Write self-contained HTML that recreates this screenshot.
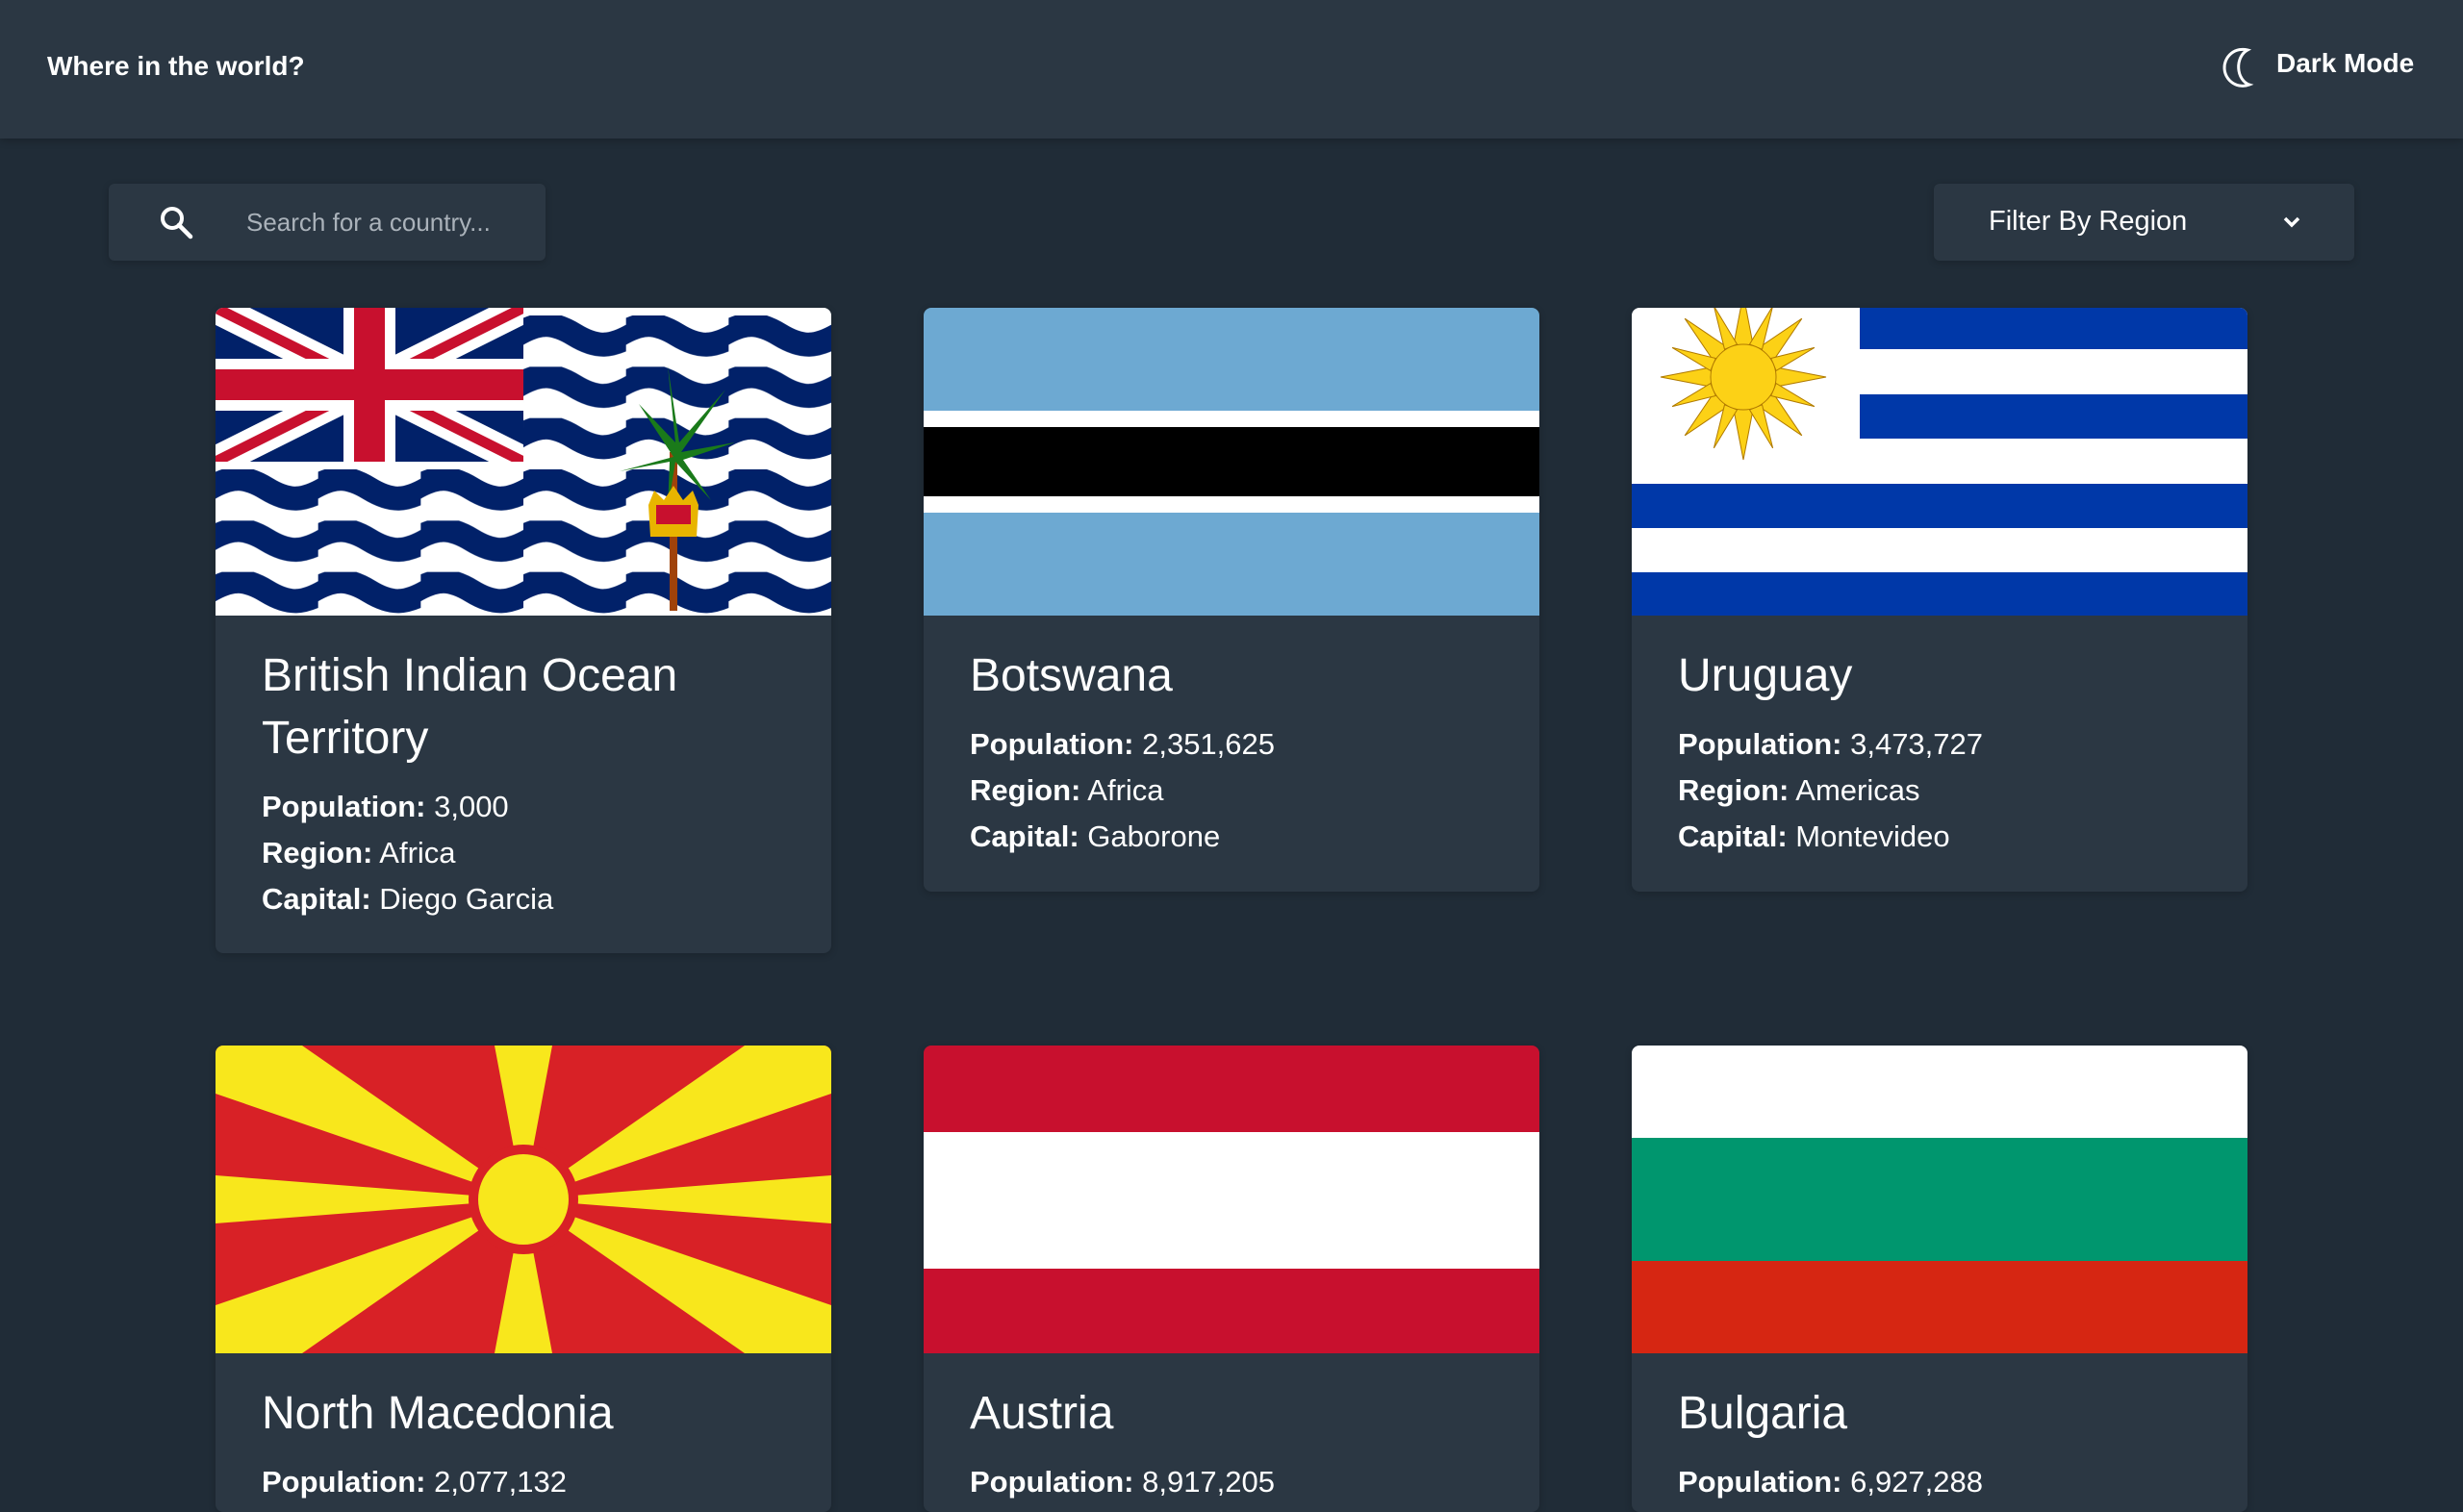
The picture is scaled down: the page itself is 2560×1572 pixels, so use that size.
<!DOCTYPE html>
<html><head><meta charset="utf-8"><style>
*{margin:0;padding:0;box-sizing:border-box}
html{width:2560px;height:1572px;overflow:hidden}
body{width:2560px;height:1572px;overflow:hidden;background:#202c37;font-family:"Liberation Sans",sans-serif;color:#fff;position:relative}
.hdr{position:absolute;left:0;top:0;width:2560px;height:144px;background:#2b3743;box-shadow:0 2px 8px rgba(0,0,0,.25)}
.t{position:absolute;left:49px;top:53px;font-weight:bold;font-size:28px}
.dm{position:absolute;left:2366px;top:50px;font-weight:bold;font-size:28px}
.box{position:absolute;top:191px;height:80px;background:#2b3743;border-radius:6px;box-shadow:0 2px 8px rgba(0,0,0,.2)}
.card{position:absolute;width:640px;background:#2b3743;border-radius:8px;overflow:hidden;box-shadow:0 2px 8px rgba(0,0,0,.2)}
.card svg{display:block}
.body{padding:30px 48px 0}
h2{font-weight:normal;font-size:48px;line-height:65px}
.d{margin-top:15px;font-size:31px;line-height:48px}
.d b{font-weight:bold}
</style></head><body>
<div class="hdr">
<div class="t">Where in the world?</div>
<svg style="position:absolute;left:2306px;top:48px" width="40" height="44" viewBox="0 0 40 44"><path d="M30 4 A19 19 0 1 0 32 40 A15 19 0 0 1 30 4 Z" fill="none" stroke="#fff" stroke-width="3"/></svg>
<div class="dm">Dark Mode</div>
</div>
<div class="box" style="left:113px;width:454px">
<svg style="position:absolute;left:52px;top:22px" width="38" height="38" viewBox="0 0 38 38"><circle cx="14" cy="14" r="10" fill="none" stroke="#fff" stroke-width="4"/><path d="M21 21 L33 33" stroke="#fff" stroke-width="4.5" stroke-linecap="round"/></svg>
<div style="position:absolute;left:143px;top:25px;font-size:26px;color:#aab2ba">Search for a country...</div>
</div>
<div class="box" style="left:2010px;width:437px">
<div style="position:absolute;left:57px;top:23px;font-size:29px">Filter By Region</div>
<svg style="position:absolute;left:362px;top:32px" width="20" height="16" viewBox="0 0 20 16"><path d="M3 4 L10 11 L17 4" fill="none" stroke="#fff" stroke-width="3.5"/></svg>
</div>

<div class="card" style="left:224px;top:320px;height:671px">
<svg width="640" height="320" viewBox="0 0 640 320">
<defs><pattern id="w" width="106.67" height="53.33" patternUnits="userSpaceOnUse" y="8"><rect width="107" height="54" fill="#fff"/><path d="M-10,22 C15,6 30,6 53,20 C76,34 91,34 117,18" fill="none" stroke="#012169" stroke-width="25"/></pattern>
<clipPath id="uj"><rect width="320" height="160"/></clipPath></defs>
<rect width="640" height="320" fill="url(#w)"/>
<g clip-path="url(#uj)"><rect width="320" height="160" fill="#012169"/>
<path d="M0 0 L320 160 M320 0 L0 160" stroke="#fff" stroke-width="32"/>
<path d="M0 0 L320 160 M320 0 L0 160" stroke="#c8102e" stroke-width="11"/>
<path d="M160 0 V160 M0 80 H320" stroke="#fff" stroke-width="54"/>
<path d="M160 0 V160 M0 80 H320" stroke="#c8102e" stroke-width="32"/></g>
<rect x="472" y="150" width="8" height="165" fill="#a0420a"/>
<g fill="#1a7a1a"><path d="M476 155 L440 100 L478 140 L470 60 L482 140 L530 85 L484 150 L540 140 L486 158 L515 200 L478 160 L470 210 L472 160 L420 170 Z"/></g>
<path d="M450 205 L456 190 L466 200 L476 185 L486 200 L496 190 L502 205 L500 238 L452 238 Z" fill="#e8b400"/>
<rect x="458" y="205" width="36" height="20" fill="#c8102e"/>
</svg>
<div class="body"><h2>British Indian Ocean Territory</h2>
<div class="d"><b>Population:</b> 3,000<br><b>Region:</b> Africa<br><b>Capital:</b> Diego Garcia</div></div>
</div>

<div class="card" style="left:960px;top:320px;height:607px">
<svg width="640" height="320" viewBox="0 0 640 320"><rect width="640" height="320" fill="#6da9d2"/><rect y="107" width="640" height="106" fill="#fff"/><rect y="124" width="640" height="72" fill="#000"/></svg>
<div class="body"><h2>Botswana</h2>
<div class="d"><b>Population:</b> 2,351,625<br><b>Region:</b> Africa<br><b>Capital:</b> Gaborone</div></div>
</div>

<div class="card" style="left:1696px;top:320px;height:607px">
<svg width="640" height="320" viewBox="0 0 640 320"><rect width="640" height="320" fill="#fff"/>
<g fill="#0038a8"><rect x="237" y="0" width="403" height="43"/><rect x="237" y="90" width="403" height="46"/><rect y="183" width="640" height="46"/><rect y="275" width="640" height="45"/></g>
<g transform="translate(116,72)" fill="#fcd116" stroke="#b07a00" stroke-width="1">
<path d="M0-86 L10-34 L0-32 L-10-34Z M0 86 L10 34 L0 32 L-10 34Z M-86 0 L-34 10 L-32 0 L-34-10Z M86 0 L34 10 L32 0 L34-10Z"/>
<path d="M0-86 L10-34 L0-32 L-10-34Z M0 86 L10 34 L0 32 L-10 34Z M-86 0 L-34 10 L-32 0 L-34-10Z M86 0 L34 10 L32 0 L34-10Z" transform="rotate(45)"/>
<path d="M0-80 L7-34 L-7-34Z M0 80 L7 34 L-7 34Z M-80 0 L-34 7 L-34-7Z M80 0 L34 7 L34-7Z" transform="rotate(22.5)"/>
<path d="M0-80 L7-34 L-7-34Z M0 80 L7 34 L-7 34Z M-80 0 L-34 7 L-34-7Z M80 0 L34 7 L34-7Z" transform="rotate(67.5)"/>
<circle r="34"/></g></svg>
<div class="body"><h2>Uruguay</h2>
<div class="d"><b>Population:</b> 3,473,727<br><b>Region:</b> Americas<br><b>Capital:</b> Montevideo</div></div>
</div>

<div class="card" style="left:224px;top:1087px;height:485px">
<svg width="640" height="320" viewBox="0 0 640 320"><rect width="640" height="320" fill="#d82126"/>
<g fill="#f8e71c"><path d="M0 0 L90 0 L320 160 L0 50Z"/><path d="M640 0 L550 0 L320 160 L640 50Z"/><path d="M0 320 L90 320 L320 160 L0 270Z"/><path d="M640 320 L550 320 L320 160 L640 270Z"/>
<path d="M290 0 L350 0 L320 160Z"/><path d="M290 320 L350 320 L320 160Z"/><path d="M0 135 L0 185 L320 160Z"/><path d="M640 135 L640 185 L320 160Z"/>
<circle cx="320" cy="160" r="52" stroke="#d82126" stroke-width="10"/></g></svg>
<div class="body"><h2>North Macedonia</h2>
<div class="d"><b>Population:</b> 2,077,132</div></div>
</div>

<div class="card" style="left:960px;top:1087px;height:485px">
<svg width="640" height="320" viewBox="0 0 640 320"><rect width="640" height="320" fill="#c8102e"/><rect y="90" width="640" height="142" fill="#fff"/></svg>
<div class="body"><h2>Austria</h2>
<div class="d"><b>Population:</b> 8,917,205</div></div>
</div>

<div class="card" style="left:1696px;top:1087px;height:485px">
<svg width="640" height="320" viewBox="0 0 640 320"><rect width="640" height="96" fill="#fff"/><rect y="96" width="640" height="128" fill="#00966e"/><rect y="224" width="640" height="96" fill="#d62612"/></svg>
<div class="body"><h2>Bulgaria</h2>
<div class="d"><b>Population:</b> 6,927,288</div></div>
</div>
</body></html>
